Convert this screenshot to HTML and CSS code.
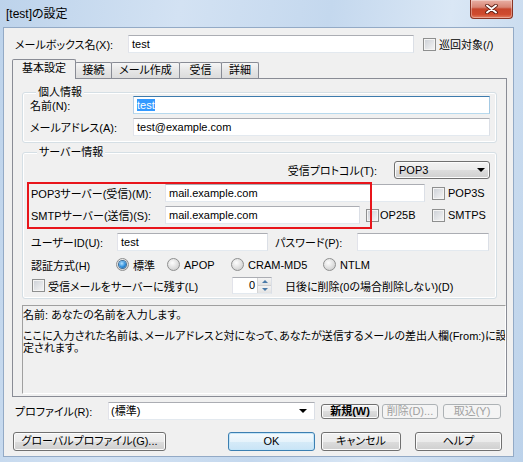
FILE: index.html
```html
<!DOCTYPE html>
<html lang="ja">
<head>
  <meta charset="UTF-8">
  <title>[test]の設定</title>
  <link rel="stylesheet" href="styles.css">
</head>
<body>
  <div class="window">
    <div class="titlebar">
      <span class="title">[test]の設定</span>
      <div class="close">
        <svg width="13" height="10" viewBox="0 0 13 10">
          <path d="M2 1.5 L11 8.5 M11 1.5 L2 8.5" stroke="#5a1a10" stroke-width="3.6" stroke-linecap="round"/>
          <path d="M2 1.5 L11 8.5 M11 1.5 L2 8.5" stroke="#fff" stroke-width="2" stroke-linecap="round"/>
        </svg>
      </div>
    </div>

    <div class="client">
      <div class="mailbox-row">
        <span class="mailbox-lbl">メールボックス名(X):</span>
        <div class="field mailbox-field">test</div>
        <span class="check mailbox-check"></span><span class="check-lbl">巡回対象(/)</span>
      </div>

      <div class="tabs">
        <div class="tab active">基本設定</div>
        <div class="tab tab-conn">接続</div>
        <div class="tab tab-compose">メール作成</div>
        <div class="tab tab-recv">受信</div>
        <div class="tab tab-detail">詳細</div>
      </div>

      <div class="panel">
        <div class="group personal">
          <div class="group-title">個人情報</div>
          <div class="frow">
            <span class="lbl-personal">名前(N):</span>
            <div class="field focus w-personal"><span class="sel">test</span></div>
          </div>
          <div class="frow">
            <span class="lbl-personal">メールアドレス(A):</span>
            <div class="field w-personal">test@example.com</div>
          </div>
        </div>

        <div class="group server">
          <div class="group-title">サーバー情報</div>
          <div class="frow proto-row">
            <span>受信プロトコル(T):</span>
            <div class="dropdown">POP3<span class="arrow"></span></div>
          </div>
          <div class="frow row-pop">
            <span class="lbl-server">POP3サーバー(受信)(M):</span>
            <div class="field w-pop">mail.example.com</div>
            <span class="check check-pop3s"></span><span class="check-lbl">POP3S</span>
          </div>
          <div class="frow row-smtp">
            <span class="lbl-server">SMTPサーバー(送信)(S):</span>
            <div class="field w-smtp">mail.example.com</div>
            <span class="op25"><span class="check"></span><span class="check-lbl">OP25B</span></span>
            <span class="check"></span><span class="check-lbl">SMTPS</span>
          </div>
          <div class="frow row-user">
            <span class="lbl-user">ユーザーID(U):</span>
            <div class="field w-user">test</div>
            <span class="lbl-pass">パスワード(P):</span>
            <div class="field w-pass"></div>
          </div>
          <div class="frow row-auth">
            <span class="lbl-auth">認証方式(H)</span>
            <span class="opt opt-std"><span class="radio on"></span><span class="opt-lbl">標準</span></span>
            <span class="opt opt-apop"><span class="radio"></span><span class="opt-lbl">APOP</span></span>
            <span class="opt opt-cram"><span class="radio"></span><span class="opt-lbl">CRAM-MD5</span></span>
            <span class="opt"><span class="radio"></span><span class="opt-lbl">NTLM</span></span>
          </div>
          <div class="frow row-keep">
            <span class="keep"><span class="check"></span><span class="check-lbl">受信メールをサーバーに残す(L)</span></span>
            <div class="spin">
              <span class="spin-val">0</span>
              <span class="spin-btns"><span class="spin-up"></span><span class="spin-down"></span></span>
            </div>
            <span class="keep-lbl">日後に削除(0の場合削除しない)(D)</span>
          </div>
          <div class="highlight"></div>
        </div>

        <div class="help">
          <p class="help-head">名前: あなたの名前を入力します。</p>
          <p>ここに入力された名前は、メールアドレスと対になって、あなたが送信するメールの差出人欄(From:)に設<br>定されます。</p>
        </div>
      </div>

      <div class="profile-row">
        <span class="profile-lbl">プロファイル(R):</span>
        <div class="field combo"><span class="combo-text">(標準)</span><span class="arrow"></span></div>
        <button class="btn small btn-new">新規(W)</button>
        <button class="btn small btn-del" disabled>削除(D)...</button>
        <button class="btn small btn-imp" disabled>取込(Y)</button>
      </div>

      <div class="button-row">
        <button class="btn btn-global">グローバルプロファイル(G)...</button>
        <button class="btn default btn-ok">OK</button>
        <button class="btn btn-cancel">キャンセル</button>
        <button class="btn btn-help">ヘルプ</button>
      </div>
    </div>
  </div>
</body>
</html>
```

FILE: styles.css
```css
* {
  box-sizing: border-box;
}
body {
  margin: 0;
  font-family: "Liberation Sans", "Noto Sans CJK JP", sans-serif;
  font-size: 11px;
  font-feature-settings: "palt";
  color: #000;
}

.window {
  width: 523px;
  height: 462px;
  display: flex;
  flex-direction: column;
  background: linear-gradient(100deg, #bdd3eb 0%, #d3e2f3 30%, #c4d8ee 55%, #dae7f5 75%, #bcd2ea 100%);
}
.titlebar {
  height: 28px;
  display: flex;
  justify-content: space-between;
  align-items: flex-start;
  padding-left: 6px;
}
.title {
  line-height: 28px;
  font-size: 12px;
}
.close {
  width: 43px;
  height: 19px;
  margin-right: 10px;
  border: 1px solid #8a3424;
  border-top: none;
  border-radius: 0 0 4px 4px;
  background: linear-gradient(#e9b0a4, #d88574 40%, #c7462c 50%, #cf4b2e 80%, #e47f62);
  box-shadow: inset 0 0 0 1px rgba(255, 255, 255, 0.35);
  display: flex;
  align-items: center;
  justify-content: center;
}

.client {
  flex: 1;
  margin: 0 10px 6px 4px;
  background: #f0f0f0;
  box-shadow: 0 0 0 1px #93aac6;
}

/* common controls */
.field {
  height: 18px;
  border: 1px solid #abadb3;
  border-color: #abadb3 #dbdfe6 #e3e9ef #e2e3ea;
  background: #fff;
  padding: 0 3px;
  line-height: 16px;
  white-space: nowrap;
  overflow: hidden;
}
.field.focus {
  border-color: #3d7bad #a4c9e3 #b7d9ed #b5cfe7;
}
.sel {
  background: #3399ff;
  color: #fff;
}
.check {
  width: 13px;
  height: 13px;
  flex: none;
  border: 1px solid #8e8f8f;
  background: linear-gradient(135deg, #cbcfd5, #f6f6f6);
  box-shadow: inset 0 0 0 1px #f4f4f4;
}
.check-lbl {
  margin-left: 3px;
  white-space: nowrap;
}
.radio {
  width: 13px;
  height: 13px;
  flex: none;
  border-radius: 50%;
  border: 1px solid #8e8f8f;
  background: radial-gradient(circle at 40% 35%, #fdfdfd, #d0d0d0 80%);
  display: flex;
  align-items: center;
  justify-content: center;
}
.radio.on::after {
  content: "";
  width: 7px;
  height: 7px;
  border-radius: 50%;
  background: radial-gradient(circle at 40% 35%, #b4e2ff, #2f8fdc 55%, #0d4f8c);
  box-shadow: 0 0 0 1px #3b6d99;
}
.arrow {
  width: 0;
  height: 0;
  border-left: 4px solid transparent;
  border-right: 4px solid transparent;
  border-top: 4px solid #000;
}

.mailbox-row {
  display: flex;
  align-items: center;
  height: 18px;
  margin-top: 7px;
  padding-left: 11px;
}
.mailbox-lbl {
  width: 113px;
}
.mailbox-field {
  width: 286px;
}
.mailbox-check {
  margin-left: 9px;
}

/* tabs */
.tabs {
  display: flex;
  align-items: flex-end;
  height: 19px;
  margin-top: 6px;
  padding-left: 8px;
}
.tab {
  height: 16px;
  border: 1px solid #898c95;
  border-bottom: none;
  border-radius: 2px 2px 0 0;
  margin-left: -1px;
  line-height: 14px;
  text-align: center;
  background: linear-gradient(#f6f6f6, #e6e6e6 50%, #dcdcdc);
}
.tab.active {
  width: 64px;
  height: 20px;
  margin-left: 0;
  margin-bottom: -1px;
  line-height: 17px;
  background: #f0f0f0;
  position: relative;
  z-index: 1;
}
.tab-conn { width: 37px; }
.tab-compose { width: 69px; }
.tab-recv { width: 43px; }
.tab-detail { width: 38px; }

.panel {
  margin: 0 6px 0 8px;
  border: 1px solid #898c95;
  padding-bottom: 2px;
  background: #f0f0f0;
}

.group {
  width: 475px;
  margin: 13px 0 0 9px;
  border: 1px solid #d5dfe5;
  border-radius: 3px;
  box-shadow: inset 0 0 0 1px #fff;
  position: relative;
}
.group-title {
  width: fit-content;
  height: 14px;
  line-height: 14px;
  margin: -8px 0 -6px 6px;
  padding: 0 2px;
  background: #f0f0f0;
}
.frow {
  display: flex;
  align-items: center;
  height: 18px;
  white-space: nowrap;
}

.personal {
  height: 51px;
  padding: 0 6px 0 7px;
}
.personal .frow {
  margin-top: 4px;
}
.personal .group-title + .frow {
  margin-top: 3px;
}
.lbl-personal {
  width: 103px;
}
.w-personal {
  width: 357px;
}

.server {
  height: 147px;
  margin-top: 9px;
  padding: 0 6px 0 8px;
}
.proto-row {
  justify-content: flex-end;
  margin-top: 8px;
}
.dropdown {
  width: 96px;
  height: 18px;
  margin-left: 17px;
  padding-left: 4px;
  padding-right: 4px;
  border: 1px solid #707070;
  border-radius: 3px;
  background: linear-gradient(#f2f2f2, #ebebeb 50%, #dddddd 50%, #cfcfcf);
  box-shadow: inset 0 0 0 1px #fcfcfc;
  display: flex;
  align-items: center;
  justify-content: space-between;
  line-height: 16px;
}
.row-pop {
  margin-top: 5px;
}
.row-smtp {
  margin-top: 4px;
}
.lbl-server {
  width: 134px;
}
.w-pop {
  width: 260px;
}
.check-pop3s {
  margin-left: 7px;
}
.w-smtp {
  width: 195px;
}
.op25 {
  width: 66px;
  margin-left: 6px;
  display: flex;
  align-items: center;
}
.op25 .check-lbl {
  margin-left: 1px;
}
.row-user {
  margin-top: 9px;
}
.lbl-user {
  width: 86px;
}
.w-user {
  width: 151px;
}
.lbl-pass {
  width: 82px;
  margin-left: 7px;
}
.w-pass {
  width: 132px;
}
.row-auth {
  height: 15px;
  margin-top: 6px;
}
.lbl-auth {
  width: 85px;
}
.opt {
  display: flex;
  align-items: center;
}
.opt-lbl {
  margin-left: 4px;
}
.opt-std { width: 51px; }
.opt-apop { width: 64px; }
.opt-cram { width: 92px; }

.row-keep {
  height: 17px;
  margin-top: 5px;
}
.keep {
  width: 200px;
  margin-left: 1px;
  display: flex;
  align-items: center;
}
.spin {
  width: 40px;
  height: 17px;
  display: flex;
  border: 1px solid #abadb3;
  border-color: #abadb3 #dbdfe6 #e3e9ef #e2e3ea;
  background: #fff;
}
.spin-val {
  flex: 1;
  text-align: right;
  padding-right: 2px;
  line-height: 15px;
}
.spin-btns {
  width: 14px;
  display: flex;
  flex-direction: column;
  border-left: 1px solid #d5d5d5;
}
.spin-up,
.spin-down {
  flex: 1;
  display: flex;
  align-items: center;
  justify-content: center;
  background: linear-gradient(#f4f4f4, #e2e2e2);
}
.spin-up {
  border-bottom: 1px solid #d0d0d0;
}
.spin-up::after,
.spin-down::after {
  content: "";
  border-left: 3px solid transparent;
  border-right: 3px solid transparent;
}
.spin-up::after {
  border-bottom: 3px solid #4a7aa8;
}
.spin-down::after {
  border-top: 3px solid #4a7aa8;
}
.keep-lbl {
  margin-left: 13px;
}

/* red annotation over the server rows */
.highlight {
  position: absolute;
  left: 4px;
  top: 29px;
  width: 345px;
  height: 47px;
  border: 2px solid #e8151b;
}

.help {
  height: 89px;
  margin: 6px 0 0 9px;
  border-top: 1px solid #a0a0a0;
  border-left: 1px solid #a0a0a0;
  border-right: 1px solid #fff;
  border-bottom: 1px solid #fff;
  padding-top: 3px;
  line-height: 12px;
  white-space: nowrap;
  overflow: hidden;
}
.help p {
  margin: 0;
}
.help .help-head {
  margin-bottom: 9px;
}

/* bottom rows */
.profile-row {
  display: flex;
  align-items: center;
  height: 18px;
  margin-top: 5px;
  padding-left: 11px;
}
.profile-lbl {
  width: 93px;
}
.combo {
  width: 207px;
  padding: 0 7px 0 2px;
  display: flex;
  align-items: center;
}
.combo-text {
  flex: 1;
}
.btn {
  height: 19px;
  padding: 0;
  border: 1px solid #707070;
  border-radius: 3px;
  background: linear-gradient(#f2f2f2, #ebebeb 50%, #dddddd 50%, #cfcfcf);
  box-shadow: inset 0 0 0 1px #fcfcfc;
  font-family: inherit;
  font-size: 11px;
  font-feature-settings: "palt";
  color: #000;
  line-height: 17px;
  white-space: nowrap;
}
.btn.small {
  height: 15px;
  line-height: 13px;
}
.btn:disabled {
  border-color: #adb2b5;
  background: #f4f4f4;
  box-shadow: none;
  color: #a0a0a0;
}
.btn.default {
  border-color: #3c7fb1;
  background: linear-gradient(#f4fafd, #e6f3fb 50%, #d6ebf8 50%, #c9e4f6);
  box-shadow: inset 0 0 0 1px #c4e5f8;
}
.btn-new {
  width: 58px;
  margin-left: 6px;
  font-weight: bold;
}
.btn-del {
  width: 56px;
  margin-left: 3px;
}
.btn-imp {
  width: 58px;
  margin-left: 5px;
}

.button-row {
  display: flex;
  align-items: center;
  height: 19px;
  margin-top: 12px;
  padding-left: 9px;
}
.btn-global {
  width: 153px;
}
.btn-ok {
  width: 87px;
  margin-left: 62px;
}
.btn-cancel {
  width: 80px;
  margin-left: 6px;
}
.btn-help {
  width: 87px;
  margin-left: 14px;
}
```
